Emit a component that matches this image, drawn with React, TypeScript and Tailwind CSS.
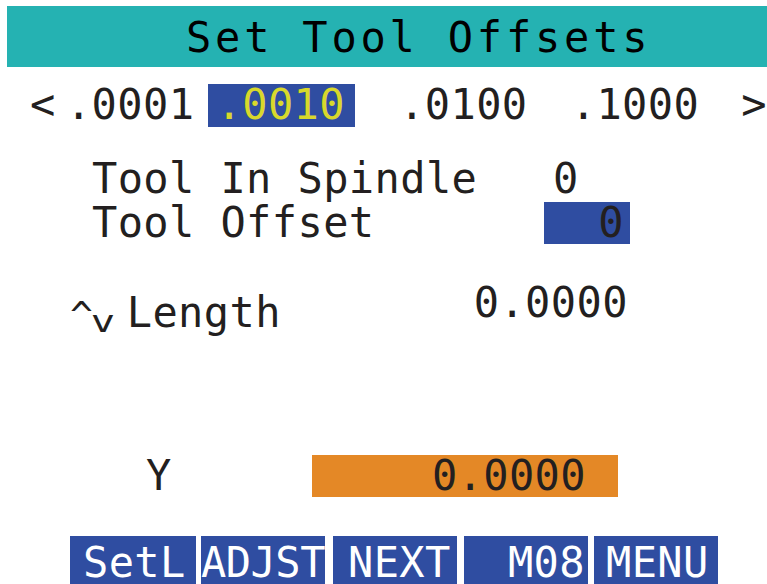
const mono = { fontFamily: '"DejaVu Sans Mono", "Liberation Mono", monospace' };

const buttons = [
  { label: 'SetL', cls: 'w-[126px] pl-[13px]' },
  { label: 'ADJST', cls: 'w-[124px] ml-[5px] pl-0 tracking-[-0.5px]' },
  { label: 'NEXT', cls: 'w-[124px] ml-[8px] pl-[15px]' },
  { label: 'M08', cls: 'w-[124px] ml-[7px] pr-[3px] text-right' },
  { label: 'MENU', cls: 'w-[124px] ml-[6px] pl-[12px]' },
];

const App = () => {
  return (
    <div
      className="w-[767px] h-[584px] bg-white overflow-hidden text-[#231f20] text-[42px] leading-[42px] tracking-[0.4px] whitespace-pre"
      style={mono}
    >
      {/* title bar */}
      <div className="mt-[6px] ml-[7px] h-[61px] bg-[#25b2b2] pt-[11px] pl-[179px] text-black tracking-[3.8px]">
        Set Tool Offsets
      </div>

      {/* jog increments */}
      <div className="mt-[17px] flex pl-[30px] h-[43px]">
        <span className="w-[36px]">&lt;</span>
        <span className="w-[142px]">.0001</span>
        <span className="w-[148px] h-[43px] pl-[9px] bg-[#2f4da1] text-[#d8d82c]">.0010</span>
        <span className="w-[44px]"></span>
        <span className="w-[172px]">.0100</span>
        <span className="w-[171px]">.1000</span>
        <span>&gt;</span>
      </div>

      {/* tool info */}
      <div className="mt-[31px] flex pl-[92px]">
        <span className="w-[461px]">Tool In Spindle</span>
        <span>0</span>
      </div>
      <div className="mt-[2px] flex pl-[92px] h-[42px]">
        <span className="w-[452px]">Tool Offset</span>
        <span className="w-[86px] h-[42px] bg-[#2f4da1] pr-[6px] text-right">0</span>
      </div>

      {/* length */}
      <div className="mt-[38px] flex items-start h-[52px]">
        <span className="ml-[70px] mt-[14px] text-[38px] leading-[38px]">^</span>
        <span className="ml-[1px] mt-[25px] text-[30px] leading-[30px] inline-block scale-x-[1.35]">v</span>
        <span className="ml-[14px] mt-[10px] w-[347px]">Length</span>
        <span>0.0000</span>
      </div>

      {/* axis */}
      <div className="mt-[121px] flex h-[42px]">
        <span className="ml-[146px] w-[166px]">Y</span>
        <span className="w-[306px] h-[42px] bg-[#e48826] pr-[32px] text-right">0.0000</span>
      </div>

      {/* soft keys */}
      <div className="mt-[39px] flex pl-[70px]">
        {buttons.map((b) => (
          <div key={b.label} className={`h-[52px] pt-[6px] bg-[#2f4da1] text-white overflow-visible ${b.cls}`}>
            {b.label}
          </div>
        ))}
      </div>
    </div>
  );
};

export default App;
